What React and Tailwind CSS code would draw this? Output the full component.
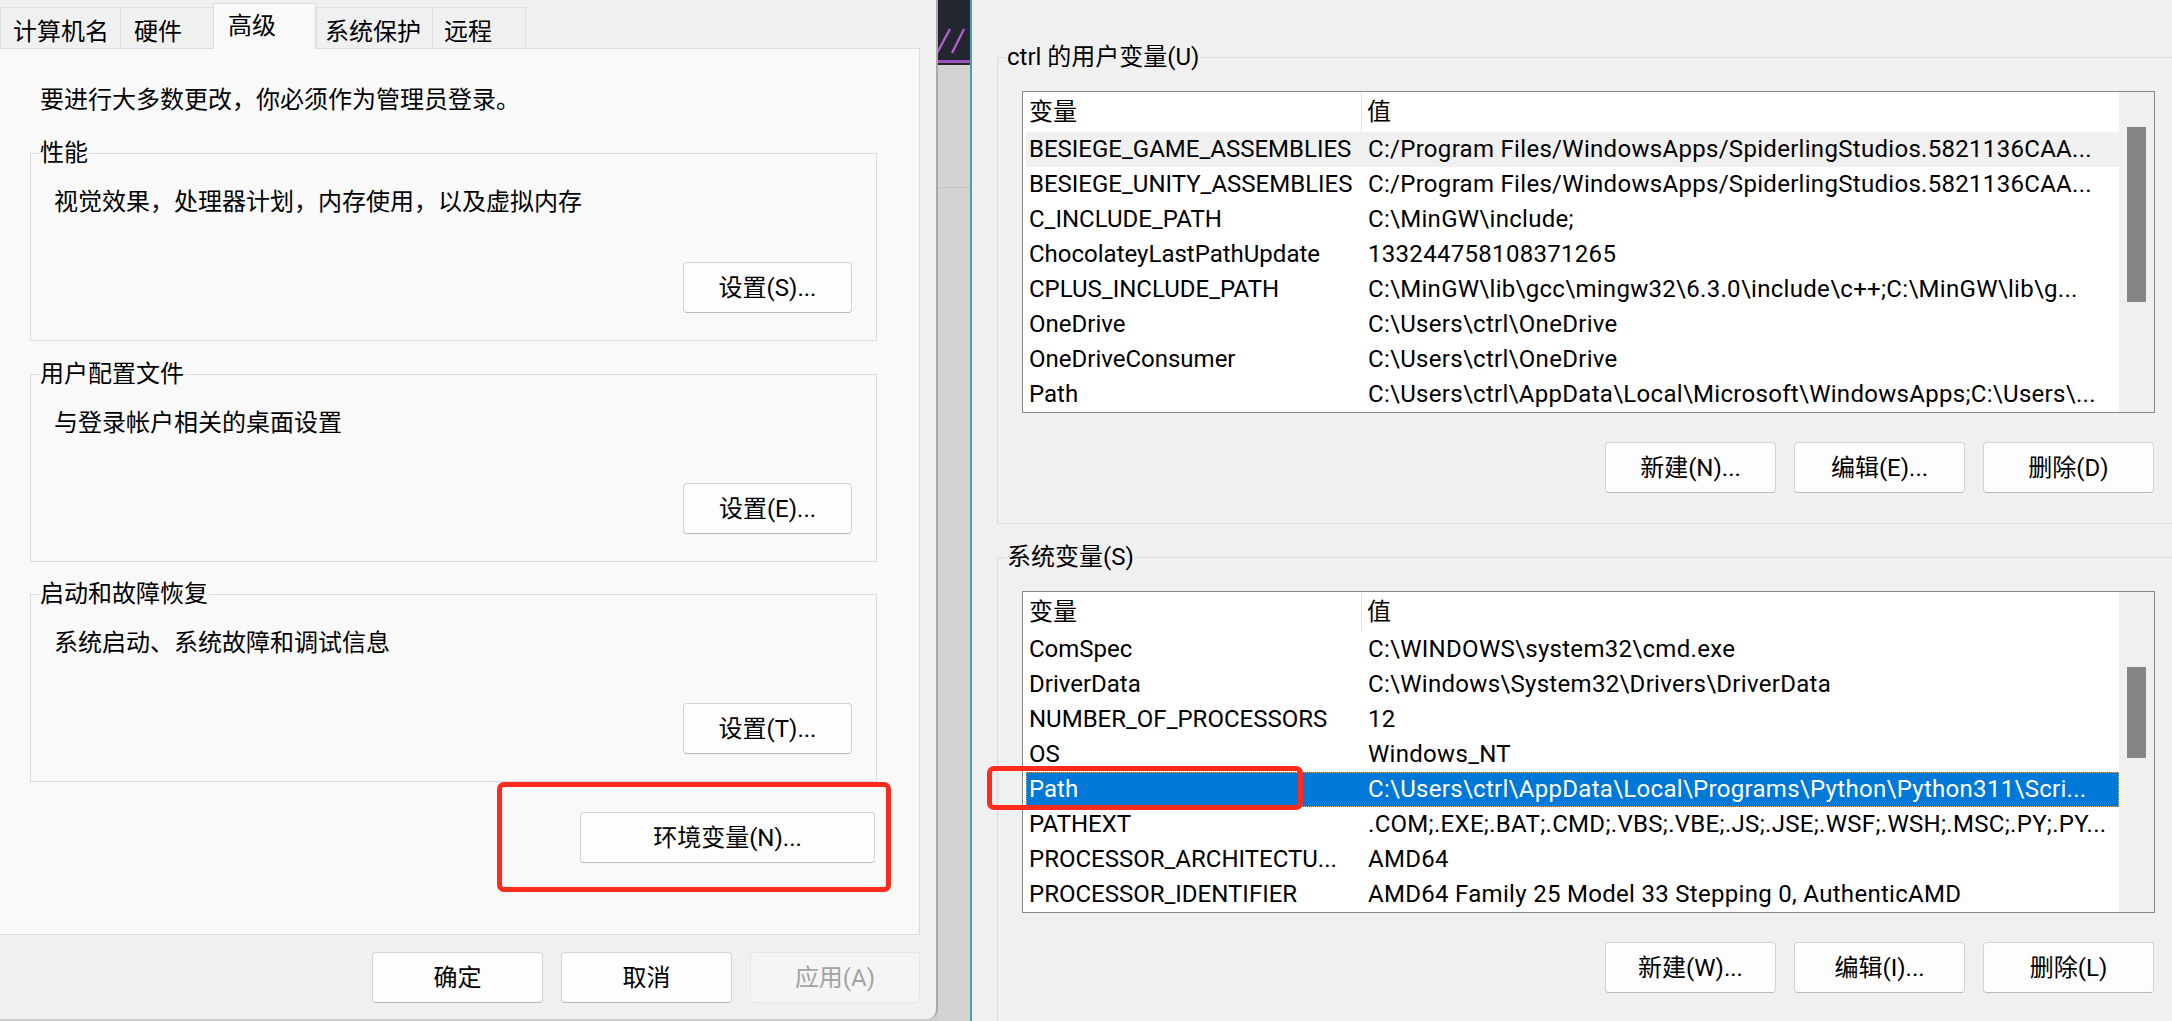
import React from "react";

const userVars = [
  ["BESIEGE_GAME_ASSEMBLIES", "C:/Program Files/WindowsApps/SpiderlingStudios.5821136CAA..."],
  ["BESIEGE_UNITY_ASSEMBLIES", "C:/Program Files/WindowsApps/SpiderlingStudios.5821136CAA..."],
  ["C_INCLUDE_PATH", "C:\\MinGW\\include;"],
  ["ChocolateyLastPathUpdate", "133244758108371265"],
  ["CPLUS_INCLUDE_PATH", "C:\\MinGW\\lib\\gcc\\mingw32\\6.3.0\\include\\c++;C:\\MinGW\\lib\\g..."],
  ["OneDrive", "C:\\Users\\ctrl\\OneDrive"],
  ["OneDriveConsumer", "C:\\Users\\ctrl\\OneDrive"],
  ["Path", "C:\\Users\\ctrl\\AppData\\Local\\Microsoft\\WindowsApps;C:\\Users\\..."],
];

const sysVars = [
  ["ComSpec", "C:\\WINDOWS\\system32\\cmd.exe"],
  ["DriverData", "C:\\Windows\\System32\\Drivers\\DriverData"],
  ["NUMBER_OF_PROCESSORS", "12"],
  ["OS", "Windows_NT"],
  ["Path", "C:\\Users\\ctrl\\AppData\\Local\\Programs\\Python\\Python311\\Scri..."],
  ["PATHEXT", ".COM;.EXE;.BAT;.CMD;.VBS;.VBE;.JS;.JSE;.WSF;.WSH;.MSC;.PY;.PY..."],
  ["PROCESSOR_ARCHITECTU...", "AMD64"],
  ["PROCESSOR_IDENTIFIER", "AMD64 Family 25 Model 33 Stepping 0, AuthenticAMD"],
];

function Btn({ children, className = "", disabled }) {
  return (
    <div
      className={
        "h-[51px] flex items-center justify-center rounded-[4px] border leading-none " +
        (disabled
          ? "bg-[#f5f5f5] border-[#e6e6e6] text-[#a3a3a3] "
          : "bg-[#fdfdfd] border-[#d3d3d3] border-b-[#b9b9b9] ") +
        className
      }
    >
      {children}
    </div>
  );
}

function Tab({ label, active, className = "" }) {
  if (active) {
    return (
      <div className={"relative z-10 -mb-px h-[46px] bg-[#f9f9f9] border-t border-l border-r border-[#dcdcdc] leading-[32px] pt-[6px] " + className}>
        {label}
      </div>
    );
  }
  return (
    <div className={"h-[41px] bg-[#f0f0f0] border-t border-l border-[#e1e1e1] leading-[32px] pt-[8px] " + className}>
      {label}
    </div>
  );
}

function Group({ title, desc, btn, className = "" }) {
  return (
    <fieldset className={"border border-[#dcdcdc] pb-[27px] " + className}>
      <legend className="ml-[8px] px-[1px] leading-[32px]">{title}</legend>
      <div className="mt-[17px] pl-[23px] leading-[32px]">{desc}</div>
      <div className="mt-[44px] flex justify-end pr-[24px]">
        <Btn className="w-[169px]">{btn}</Btn>
      </div>
    </fieldset>
  );
}

function VarList({ rows, hoverIndex, selectIndex, thumbTop, thumbH }) {
  return (
    <div className="ml-[24px] mt-[18px] w-[1133px] h-[322px] border border-[#828790] bg-white flex">
      <div className="flex-1 overflow-hidden">
        <div className="h-[40px] flex items-center">
          <div className="w-[339px] h-full flex items-center pl-[6px] border-r border-[#e5e5e5]">变量</div>
          <div className="pl-[5px]">值</div>
        </div>
        {rows.map(([name, value], i) => {
          const sel = i === selectIndex;
          const hov = i === hoverIndex;
          return (
            <div
              key={name + i}
              className={
                "ml-[3px] h-[35px] leading-[35px] flex whitespace-nowrap " +
                (sel
                  ? "bg-[#0078d7] text-white outline-1 outline-dotted outline-[#d9b27c] -outline-offset-1"
                  : hov
                  ? "bg-[#f0f0f0]"
                  : "")
              }
            >
              <div className="w-[336px] pl-[3px] overflow-hidden">{name}</div>
              <div className="flex-1 pl-[6px] overflow-hidden tracking-[0.3px]">{value}</div>
            </div>
          );
        })}
      </div>
      <div className="w-[35px] bg-[#f0f0f0] px-[8px]">
        <div className={"w-[19px] bg-[#858585] " + thumbTop + " " + thumbH} />
      </div>
    </div>
  );
}

function ListButtons({ labels }) {
  return (
    <div className="ml-[24px] mt-[29px] w-[1133px] flex justify-end gap-[18px] pr-[1px]">
      {labels.map((l) => (
        <Btn key={l} className="w-[171px]">{l}</Btn>
      ))}
    </div>
  );
}

export default function App() {
  return (
    <div className="flex w-[2172px] h-[1021px] overflow-hidden bg-[#cdcdcd] text-[24px] text-black font-[Roboto,'Noto_Sans_CJK_SC',sans-serif]">
      {/* left dialog */}
      <div className="w-[938px] h-[1019px] shrink-0 bg-[#f0f0f0] border-r-2 border-[#a9a9a9] rounded-br-[10px] flex flex-col">
        <div className="h-[48px] flex items-end">
          <Tab label="计算机名" className="w-[120px] pl-[12px]" />
          <Tab label="硬件" className="w-[93px] pl-[13px]" />
          <Tab label="高级" active className="w-[103px] pl-[14px]" />
          <Tab label="系统保护" className="w-[116px] pl-[8px]" />
          <Tab label="远程" className="w-[94px] pl-[11px] border-r" />
        </div>
        <div className="w-[920px] h-[887px] bg-[#f9f9f9] border-t border-r border-b border-[#dcdcdc] pl-[30px] pr-[42px]">
          <div className="mt-[35px] pl-[10px] leading-[32px]">要进行大多数更改，你必须作为管理员登录。</div>
          <Group className="mt-[21px]" title="性能" desc="视觉效果，处理器计划，内存使用，以及虚拟内存" btn="设置(S)..." />
          <Group className="mt-[17px]" title="用户配置文件" desc="与登录帐户相关的桌面设置" btn="设置(E)..." />
          <Group className="mt-[16px]" title="启动和故障恢复" desc="系统启动、系统故障和调试信息" btn="设置(T)..." />
          <div className="relative pt-[30px]">
            <Btn className="ml-[550px] w-[295px]">环境变量(N)...</Btn>
            <div className="absolute left-[467px] top-0 w-[394px] h-[110px] border-[5px] border-[#fd2a1e] rounded-[7px]" />
          </div>
        </div>
        <div className="flex justify-end gap-[18px] pt-[17px] pr-[16px]">
          <Btn className="w-[171px]">确定</Btn>
          <Btn className="w-[171px]">取消</Btn>
          <Btn disabled className="w-[170px]">应用(A)</Btn>
        </div>
      </div>

      {/* background editor strip */}
      <div className="w-[32px] shrink-0 flex flex-col bg-[#d3d3d3]">
        <div className="h-[65px] bg-[#23262e] relative overflow-hidden">
          <svg width="32" height="65" viewBox="0 0 32 65">
            <line x1="-1" y1="53" x2="12" y2="29" stroke="#b45ccf" strokeWidth="2.4" />
            <line x1="14" y1="53" x2="26" y2="29" stroke="#b45ccf" strokeWidth="2.4" />
            <rect x="0" y="60" width="32" height="3" fill="#a24fc0" />
          </svg>
        </div>
        <div className="h-[123px] border-b border-[#c4c4c4]" />
      </div>
      <div className="w-[2px] shrink-0 bg-[#4a9fb4]" />

      {/* environment variables window */}
      <div className="flex-1 bg-[#f0f0f0] overflow-hidden pl-[25px]">
        <fieldset className="mt-[41px] w-[1220px] border border-[#dcdcdc] pb-[30px]">
          <legend className="ml-[8px] px-[1px] leading-[32px]">ctrl 的用户变量(U)</legend>
          <VarList rows={userVars} hoverIndex={0} selectIndex={-1} thumbTop="mt-[35px]" thumbH="h-[175px]" />
          <ListButtons labels={["新建(N)...", "编辑(E)...", "删除(D)"]} />
        </fieldset>
        <fieldset className="mt-[17px] w-[1220px] border border-[#dcdcdc] pb-[80px]">
          <legend className="ml-[8px] px-[1px] leading-[32px]">系统变量(S)</legend>
          <div className="relative">
            <VarList rows={sysVars} hoverIndex={-1} selectIndex={4} thumbTop="mt-[75px]" thumbH="h-[91px]" />
            <div className="absolute left-[-11px] top-[175px] w-[316px] h-[44px] border-[5px] border-[#fd2a1e] rounded-[7px]" />
          </div>
          <ListButtons labels={["新建(W)...", "编辑(I)...", "删除(L)"]} />
        </fieldset>
      </div>
    </div>
  );
}
